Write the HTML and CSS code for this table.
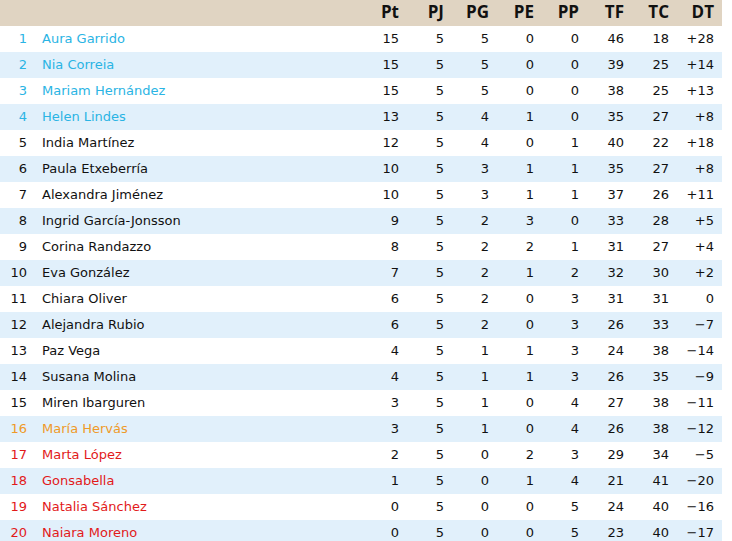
FILE: index.html
```html
<!DOCTYPE html>
<html lang="es">
<head>
<meta charset="utf-8">
<title>Clasificación</title>
<link rel="stylesheet" href="styles.css">
</head>
<body>
<table class="standings">
  <colgroup>
    <col class="c-rank"><col class="c-name">
    <col class="c-num"><col class="c-num"><col class="c-num"><col class="c-num">
    <col class="c-num"><col class="c-num"><col class="c-num"><col class="c-num">
  </colgroup>
  <thead>
    <tr><th></th><th></th><th>Pt</th><th>PJ</th><th>PG</th><th>PE</th><th>PP</th><th>TF</th><th>TC</th><th>DT</th></tr>
  </thead>
  <tbody>
    <tr class="up"><td>1</td><td>Aura Garrido</td><td>15</td><td>5</td><td>5</td><td>0</td><td>0</td><td>46</td><td>18</td><td>+28</td></tr>
    <tr class="up"><td>2</td><td>Nia Correia</td><td>15</td><td>5</td><td>5</td><td>0</td><td>0</td><td>39</td><td>25</td><td>+14</td></tr>
    <tr class="up"><td>3</td><td>Mariam Hernández</td><td>15</td><td>5</td><td>5</td><td>0</td><td>0</td><td>38</td><td>25</td><td>+13</td></tr>
    <tr class="up"><td>4</td><td>Helen Lindes</td><td>13</td><td>5</td><td>4</td><td>1</td><td>0</td><td>35</td><td>27</td><td>+8</td></tr>
    <tr><td>5</td><td>India Martínez</td><td>12</td><td>5</td><td>4</td><td>0</td><td>1</td><td>40</td><td>22</td><td>+18</td></tr>
    <tr><td>6</td><td>Paula Etxeberría</td><td>10</td><td>5</td><td>3</td><td>1</td><td>1</td><td>35</td><td>27</td><td>+8</td></tr>
    <tr><td>7</td><td>Alexandra Jiménez</td><td>10</td><td>5</td><td>3</td><td>1</td><td>1</td><td>37</td><td>26</td><td>+11</td></tr>
    <tr><td>8</td><td>Ingrid García-Jonsson</td><td>9</td><td>5</td><td>2</td><td>3</td><td>0</td><td>33</td><td>28</td><td>+5</td></tr>
    <tr><td>9</td><td>Corina Randazzo</td><td>8</td><td>5</td><td>2</td><td>2</td><td>1</td><td>31</td><td>27</td><td>+4</td></tr>
    <tr><td>10</td><td>Eva González</td><td>7</td><td>5</td><td>2</td><td>1</td><td>2</td><td>32</td><td>30</td><td>+2</td></tr>
    <tr><td>11</td><td>Chiara Oliver</td><td>6</td><td>5</td><td>2</td><td>0</td><td>3</td><td>31</td><td>31</td><td>0</td></tr>
    <tr><td>12</td><td>Alejandra Rubio</td><td>6</td><td>5</td><td>2</td><td>0</td><td>3</td><td>26</td><td>33</td><td>−7</td></tr>
    <tr><td>13</td><td>Paz Vega</td><td>4</td><td>5</td><td>1</td><td>1</td><td>3</td><td>24</td><td>38</td><td>−14</td></tr>
    <tr><td>14</td><td>Susana Molina</td><td>4</td><td>5</td><td>1</td><td>1</td><td>3</td><td>26</td><td>35</td><td>−9</td></tr>
    <tr><td>15</td><td>Miren Ibarguren</td><td>3</td><td>5</td><td>1</td><td>0</td><td>4</td><td>27</td><td>38</td><td>−11</td></tr>
    <tr class="mid"><td>16</td><td>María Hervás</td><td>3</td><td>5</td><td>1</td><td>0</td><td>4</td><td>26</td><td>38</td><td>−12</td></tr>
    <tr class="down"><td>17</td><td>Marta López</td><td>2</td><td>5</td><td>0</td><td>2</td><td>3</td><td>29</td><td>34</td><td>−5</td></tr>
    <tr class="down"><td>18</td><td>Gonsabella</td><td>1</td><td>5</td><td>0</td><td>1</td><td>4</td><td>21</td><td>41</td><td>−20</td></tr>
    <tr class="down"><td>19</td><td>Natalia Sánchez</td><td>0</td><td>5</td><td>0</td><td>0</td><td>5</td><td>24</td><td>40</td><td>−16</td></tr>
    <tr class="down"><td>20</td><td>Naiara Moreno</td><td>0</td><td>5</td><td>0</td><td>0</td><td>5</td><td>23</td><td>40</td><td>−17</td></tr>
  </tbody>
</table>
</body>
</html>
```

FILE: styles.css
```css
html, body {
  margin: 0;
  padding: 0;
  background: #ffffff;
}

.standings {
  width: 722px;
  border-collapse: collapse;
  table-layout: fixed;
  font-family: "DejaVu Sans", Verdana, sans-serif;
  font-size: 13px;
  color: #111111;
}

.c-rank { width: 35px; }
.c-name { width: 327px; }
.c-num { width: 45px; }

.standings tr {
  height: 26px;
}

.standings thead th {
  background: #e0d4c2;
  padding: 0 8px 2px 0;
  text-align: right;
  font-family: "Open Sans", sans-serif;
  font-weight: 700;
  font-size: 17px;
  line-height: 20px;
  color: #111111;
  vertical-align: middle;
}

.standings tbody td {
  padding: 0 8px 1px 0;
  line-height: 16px;
  text-align: right;
  vertical-align: middle;
  white-space: nowrap;
}

.standings tbody td:nth-child(2) {
  text-align: left;
  padding-left: 7px;
}

.standings tbody tr:nth-child(even) {
  background: #e1f0fb;
}

.standings tr.up td:nth-child(-n+2) { color: #2ab4e4; }
.standings tr.mid td:nth-child(-n+2) { color: #ef9a28; }
.standings tr.down td:nth-child(-n+2) { color: #e21a1a; }
```
